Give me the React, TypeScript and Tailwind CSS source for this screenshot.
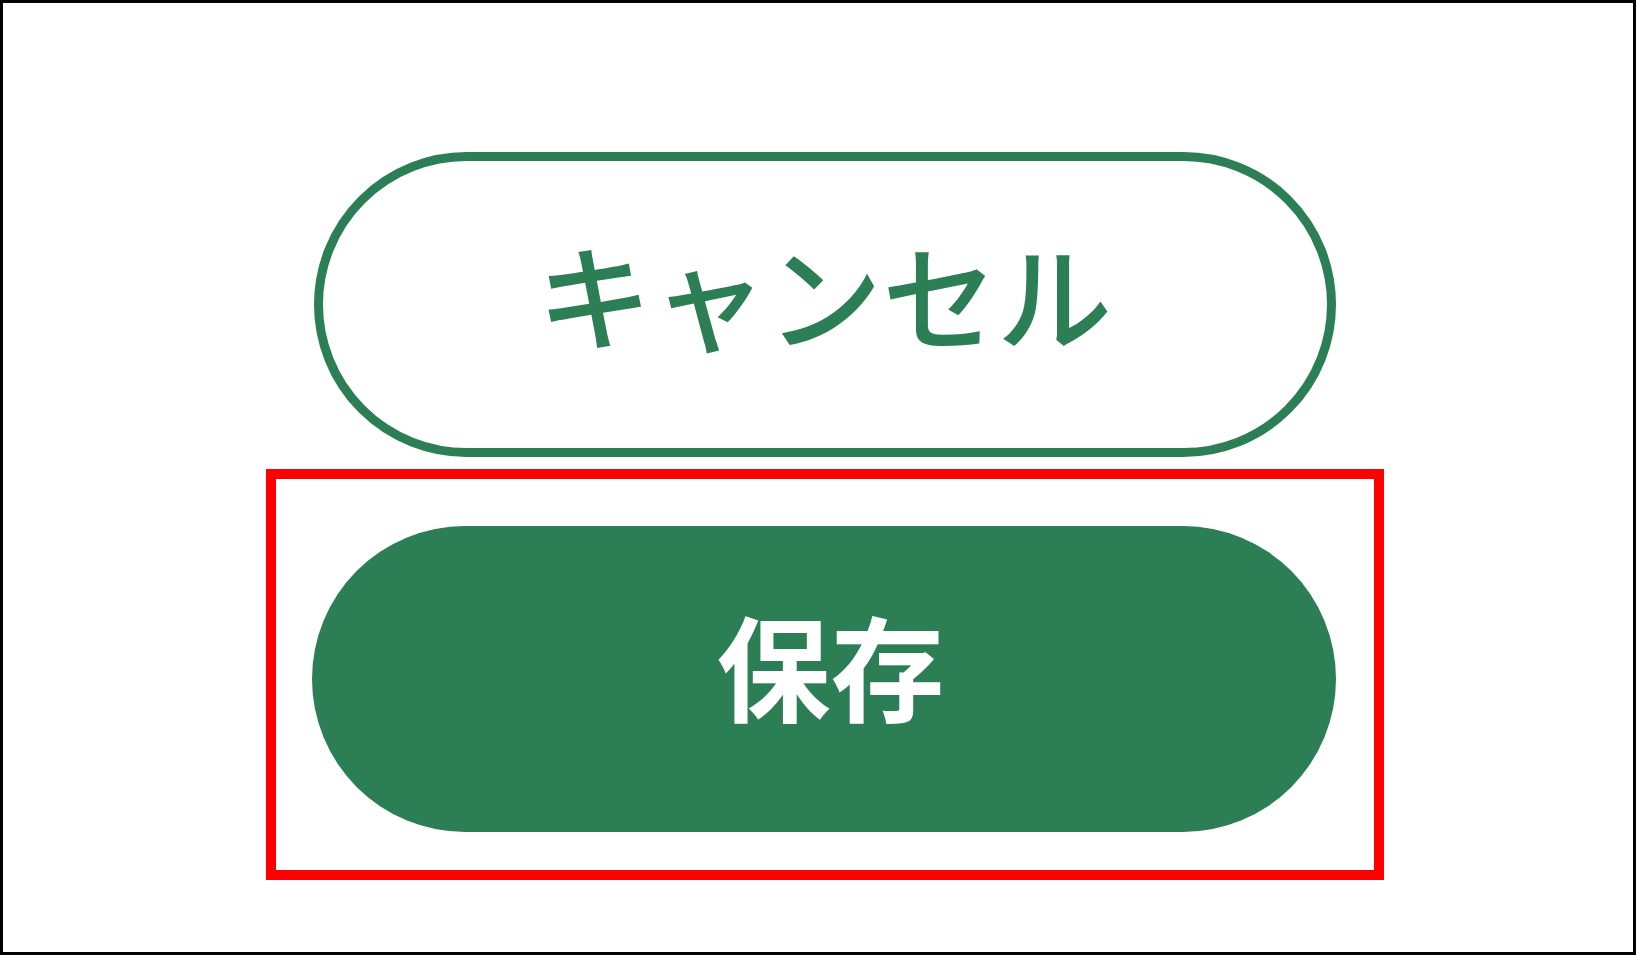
import React from "react";

export default function App() {
  return (
    <div
      className="w-[1636px] h-[955px] bg-white border-[3px] border-black overflow-hidden"
      style={{ fontFamily: '"Noto Sans CJK JP", "Noto Sans", sans-serif' }}
    >
      <div className="flex flex-col items-center pl-[13px] pt-[149px]">
        {/* cancel */}
        <button className="w-[1022px] h-[305px] rounded-full border-[9px] border-[#2c7e55] bg-white flex items-center justify-center pb-[24px] text-[#2c7e55] text-[115px] font-medium leading-none">
          キャンセル
        </button>

        {/* highlighted save */}
        <div className="mt-[12px] w-[1118px] h-[411px] border-[10px] border-[#ff0000] pt-[47px] pl-[36px]">
          <button className="w-[1024px] h-[306px] rounded-full bg-[#2c7e55] flex items-center justify-center pb-[30px] pl-[14px] text-white text-[114px] font-bold leading-none">
            保存
          </button>
        </div>
      </div>
    </div>
  );
}
